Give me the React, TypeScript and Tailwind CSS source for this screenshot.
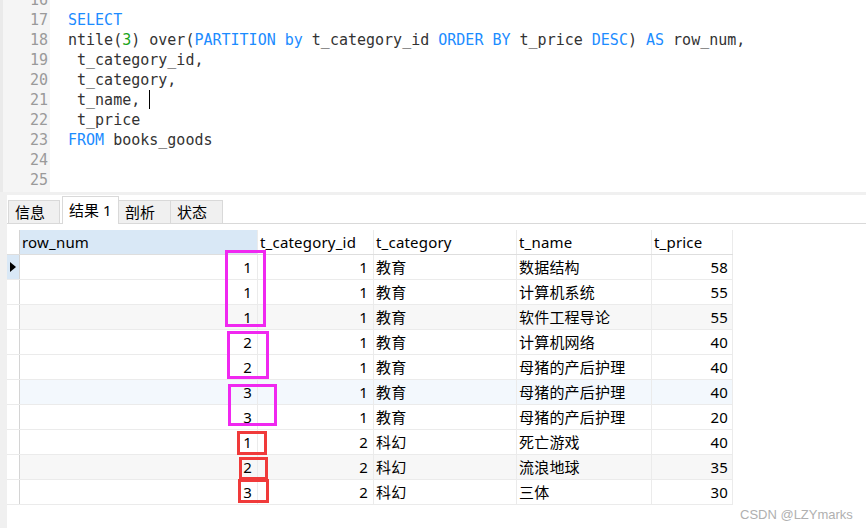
import React from 'react';

const codeLines: { n: number; parts: [string, string][] }[] = [
  { n: 16, parts: [] },
  { n: 17, parts: [['k', 'SELECT']] },
  {
    n: 18,
    parts: [
      ['t', 'ntile('],
      ['g', '3'],
      ['t', ') over('],
      ['k', 'PARTITION by'],
      ['t', ' t_category_id '],
      ['k', 'ORDER BY'],
      ['t', ' t_price '],
      ['k', 'DESC'],
      ['t', ') '],
      ['k', 'AS'],
      ['t', ' row_num,'],
    ],
  },
  { n: 19, parts: [['t', ' t_category_id,']] },
  { n: 20, parts: [['t', ' t_category,']] },
  { n: 21, parts: [['t', ' t_name, '], ['c', '']] },
  { n: 22, parts: [['t', ' t_price']] },
  { n: 23, parts: [['k', 'FROM'], ['t', ' books_goods']] },
  { n: 24, parts: [] },
  { n: 25, parts: [] },
];

const rows: [number, number, string, string, number][] = [
  [1, 1, '教育', '数据结构', 58],
  [1, 1, '教育', '计算机系统', 55],
  [1, 1, '教育', '软件工程导论', 55],
  [2, 1, '教育', '计算机网络', 40],
  [2, 1, '教育', '母猪的产后护理', 40],
  [3, 1, '教育', '母猪的产后护理', 40],
  [3, 1, '教育', '母猪的产后护理', 20],
  [1, 2, '科幻', '死亡游戏', 40],
  [2, 2, '科幻', '流浪地球', 35],
  [3, 2, '科幻', '三体', 30],
];

const rowBg = (i: number) => {
  if (i === 2 || i === 8) return 'bg-[#f7f7f7]';
  if (i === 5) return 'bg-[#f3f8fd]';
  return 'bg-white';
};

function Editor() {
  return (
    <div className="h-[192px] flex overflow-hidden bg-white">
      {/* gutter */}
      <div className="w-[50px] shrink-0 bg-[#f5f5f5] border-l-[3px] border-[#eaeaea]">
        <div className="mt-[-10px]">
          {codeLines.map((l) => (
            <div key={l.n} className="h-[20px] leading-[20px] text-right pr-[2px] text-[#9a9a9a]">
              {l.n}
            </div>
          ))}
        </div>
      </div>
      {/* code */}
      <div className="flex-1 pl-[18px]">
        <div className="mt-[-10px]">
          {codeLines.map((l) => (
            <div key={l.n} className="h-[20px] leading-[20px] whitespace-pre text-[#333333]">
              {l.parts.map(([kind, text], i) => {
                if (kind === 'c')
                  return <span key={i} className="inline-block w-[1px] h-[19px] bg-black align-[-4px]" />;
                const color =
                  kind === 'k' ? 'text-[#1c8cff]' : kind === 'g' ? 'text-[#19a319]' : 'text-[#333333]';
                return (
                  <span key={i} className={color}>
                    {text}
                  </span>
                );
              })}
            </div>
          ))}
        </div>
      </div>
    </div>
  );
}

function Tabs() {
  const tab = 'h-[23px] border border-b-0 border-[#d9d9d9] bg-[#f0f0f0] flex items-center pl-[6px] pt-[1px] text-[15px] text-black';
  return (
    <div className="h-[29px] flex items-end border-b border-[#d9d9d9] pl-[1px]">
      <div className={`${tab} w-[52px]`}>信息</div>
      <div className="ml-[2px] w-[57px] h-[28px] mb-[-1px] border border-b-0 border-[#d9d9d9] bg-white flex items-center pl-[6px] text-[15px] text-black">
        结果 1
      </div>
      <div className={`${tab} w-[52px] border-l-0 pl-[5px]`}>剖析</div>
      <div className={`${tab} w-[52px] border-l-0`}>状态</div>
    </div>
  );
}

function Table() {
  const cell = 'h-full flex items-center border-r border-[#ebebeb]';
  return (
    <div className="mt-[6px] w-[726px] text-[15px] text-black tracking-[0.2px]">
      {/* header */}
      <div className="h-[25px] flex border-b border-[#dedede]">
        <div className="w-[13px] h-full border-r border-[#d4d4d4] bg-white" />
        <div className={`${cell} w-[238px] bg-[#d9e8f6] pl-[2px] border-[#e4e4e4]`}>row_num</div>
        <div className={`${cell} w-[116px] pl-[2px] border-[#e4e4e4]`}>t_category_id</div>
        <div className={`${cell} w-[143px] pl-[2px] border-[#e4e4e4]`}>t_category</div>
        <div className={`${cell} w-[135px] pl-[2px] border-[#e4e4e4]`}>t_name</div>
        <div className={`${cell} w-[81px] pl-[2px] border-[#e4e4e4]`}>t_price</div>
      </div>
      {rows.map((r, i) => (
        <div key={i} className={`h-[25px] flex border-b border-[#ebebeb] ${rowBg(i)}`}>
          <div
            className={`w-[13px] h-full border-r border-[#d4d4d4] flex items-center justify-center ${
              i === 0 ? 'bg-[#d9e8f6]' : 'bg-white'
            }`}
          >
            {i === 0 && (
              <svg width="6" height="10" viewBox="0 0 6 10">
                <path d="M0 0 L6 5 L0 10 Z" fill="#000" />
              </svg>
            )}
          </div>
          <div className={`${cell} w-[238px] justify-end pr-[5px]`}>{r[0]}</div>
          <div className={`${cell} w-[116px] justify-end pr-[5px]`}>{r[1]}</div>
          <div className={`${cell} w-[143px] pl-[2px]`}>{r[2]}</div>
          <div className={`${cell} w-[135px] pl-[2px]`}>{r[3]}</div>
          <div className={`${cell} w-[81px] justify-end pr-[4px]`}>{r[4]}</div>
        </div>
      ))}
    </div>
  );
}

export default function App() {
  return (
    <div
      className="relative w-[866px] h-[528px] overflow-hidden bg-white"
      style={{ fontFamily: '"Noto Sans", "Noto Sans CJK SC", sans-serif' }}
    >
      <div className="text-[15px]" style={{ fontFamily: '"DejaVu Sans Mono", monospace' }}>
        <Editor />
      </div>
      <div className="h-[3px] bg-[#f0f0f0]" />
      <div className="flex h-[333px]">
        <div className="w-[7px] shrink-0 bg-[#f0f0f0]" />
        <div className="flex-1">
          <Tabs />
          <Table />
        </div>
      </div>

      {/* annotation boxes */}
      <div className="absolute left-[225px] top-[250px] w-[41px] h-[77px] border-[3px] border-[#f028f0]" />
      <div className="absolute left-[227px] top-[331px] w-[42px] h-[48px] border-[3px] border-[#f028f0]" />
      <div className="absolute left-[228px] top-[384px] w-[49px] h-[42px] border-[3px] border-[#f028f0]" />
      <div className="absolute left-[237px] top-[431px] w-[30px] h-[24px] border-[3px] border-[#f03a3a]" />
      <div className="absolute left-[239px] top-[457px] w-[29px] h-[23px] border-[3px] border-[#f03a3a]" />
      <div className="absolute left-[238px] top-[479px] w-[31px] h-[24px] border-[3px] border-[#f03a3a]" />

      <div
        className="absolute left-[740px] top-[505px] text-[13px] text-[#b0b0b0]"
        style={{ fontFamily: '"Liberation Sans", Arial, sans-serif' }}
      >
        CSDN @LZYmarks
      </div>
    </div>
  );
}
